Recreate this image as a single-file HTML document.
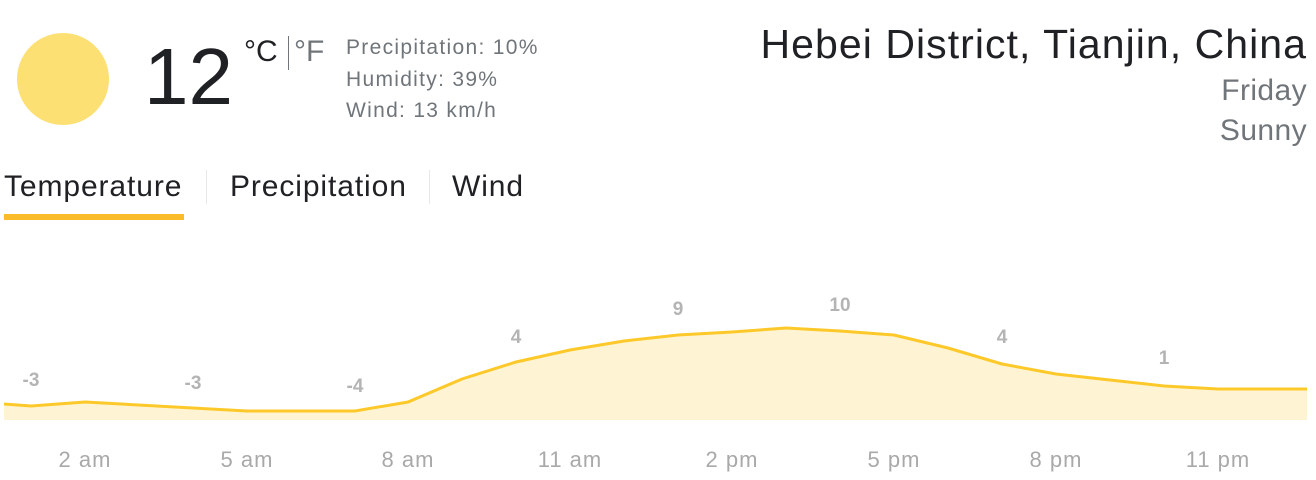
<!DOCTYPE html>
<html><head><meta charset="utf-8"><style>
body{margin:0;width:1316px;height:480px;background:#fff;font-family:"Liberation Sans",Arial,sans-serif;position:relative;overflow:hidden}
.a{position:absolute;white-space:nowrap}
</style></head><body>
<div class="a" style="left:17px;top:33px;width:92px;height:92px;border-radius:50%;background:#fde073"></div>
<div class="a" style="left:144px;top:27px;font-size:80px;line-height:100px;color:#202124">12</div>
<div class="a" style="left:244px;top:35px;font-size:30px;color:#202124">°C</div>
<div class="a" style="left:288px;top:36px;width:1px;height:34px;background:#70757a"></div>
<div class="a" style="left:294px;top:35px;font-size:30px;color:#70757a">°F</div>
<div class="a" style="left:346px;top:32px;font-size:21px;letter-spacing:1.3px;line-height:31.5px;color:#70757a">Precipitation: 10%<br>Humidity: 39%<br>Wind: 13 km/h</div>
<div class="a" style="right:9px;top:21px;font-size:41px;letter-spacing:1.05px;color:#202124">Hebei District, Tianjin, China</div>
<div class="a" style="right:9px;top:71px;font-size:30px;letter-spacing:0.4px;line-height:40px;color:#70757a;text-align:right">Friday<br>Sunny</div>
<div class="a" style="left:4px;top:170px;font-size:30px;letter-spacing:0.9px;color:#202124">Temperature</div>
<div class="a" style="left:4px;top:214px;width:180px;height:6px;background:#fbbc2b"></div>
<div class="a" style="left:206px;top:170px;width:1px;height:34px;background:#e8e8e8"></div>
<div class="a" style="left:230px;top:170px;font-size:30px;letter-spacing:0.9px;color:#202124">Precipitation</div>
<div class="a" style="left:429px;top:170px;width:1px;height:34px;background:#e8e8e8"></div>
<div class="a" style="left:452px;top:170px;font-size:30px;letter-spacing:0.9px;color:#202124">Wind</div>
<svg class="a" style="left:0;top:0" width="1316" height="480">
<polygon fill="#fef4d3" points="4,420 4,404 31,406 85,402 247,411 355,411 408,402 462,379 516,362 570,350 624,341 678,335 732,332 786,328 840,331 894,335 948,348 1002,364 1056,374 1110,380 1164,386 1218,389 1307,389 1307,420"/>
<polyline fill="none" stroke="#fdc92a" stroke-width="3" points="4,404 31,406 85,402 247,411 355,411 408,402 462,379 516,362 570,350 624,341 678,335 732,332 786,328 840,331 894,335 948,348 1002,364 1056,374 1110,380 1164,386 1218,389 1307,389"/>
<g font-family="Liberation Sans,Arial,sans-serif" font-weight="bold" font-size="19" fill="#b4b4b4" text-anchor="middle">
<text x="31" y="386">-3</text><text x="193" y="389">-3</text><text x="355" y="392">-4</text><text x="516" y="343">4</text><text x="678" y="315">9</text><text x="840" y="311">10</text><text x="1002" y="343">4</text><text x="1164" y="364">1</text>
</g>
<g font-family="Liberation Sans,Arial,sans-serif" font-size="22" letter-spacing="1" fill="#a9a9a9" text-anchor="middle">
<text x="85" y="467">2 am</text><text x="247" y="467">5 am</text><text x="408" y="467">8 am</text><text x="570" y="467">11 am</text><text x="732" y="467">2 pm</text><text x="894" y="467">5 pm</text><text x="1056" y="467">8 pm</text><text x="1218" y="467">11 pm</text>
</g>
</svg>
</body></html>
